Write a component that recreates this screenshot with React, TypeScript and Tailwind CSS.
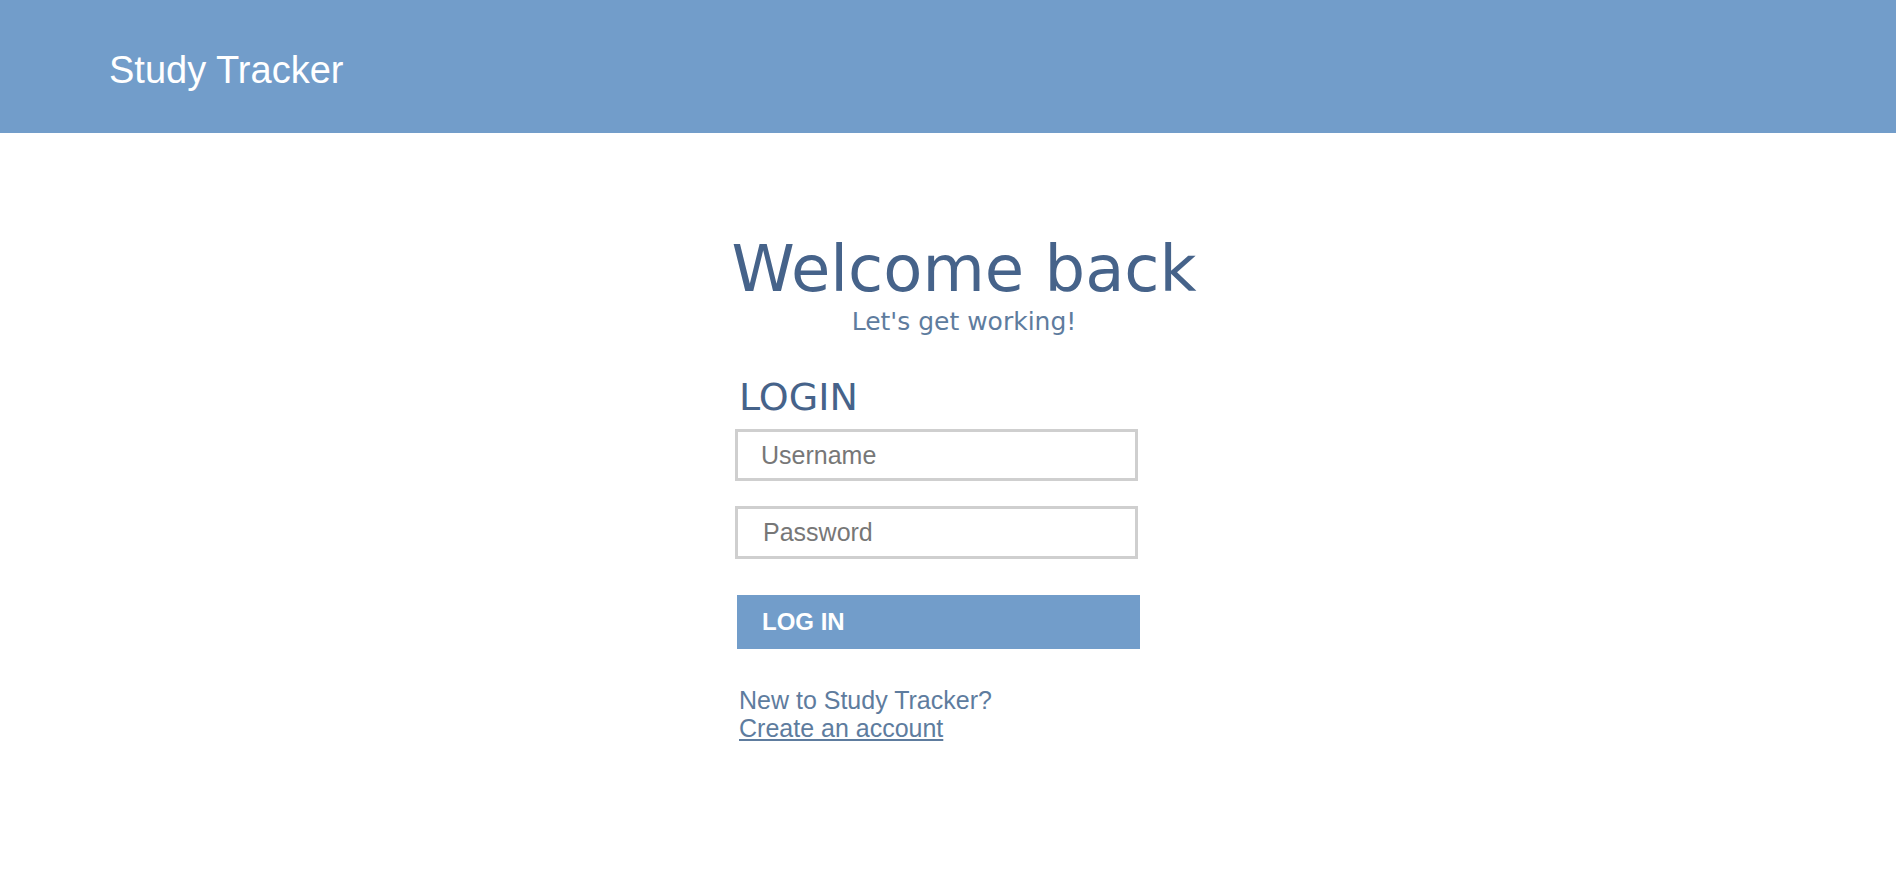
import { useState } from 'react';

export default function App() {
  const [username, setUsername] = useState('');
  const [password, setPassword] = useState('');

  return (
    <div className="min-h-[890px] bg-white font-['Liberation_Sans',Arial,sans-serif]">
      <header className="h-[133px] bg-[#729dca] flex items-center pl-[109px] mr-[4px]">
        <h1 className="text-[38px] leading-none text-white pt-[6px]">Study Tracker</h1>
      </header>

      <main className="flex flex-col items-center">
        <div className="flex flex-col items-center ml-[28px] mt-[104px] font-['DejaVu_Sans',Verdana,sans-serif]">
          <h2 className="text-[64px] leading-[64px] text-[#46638a]">Welcome back</h2>
          <p className="mt-[7px] text-[25px] leading-[28px] text-[#5e7c9e]">Let's get working!</p>
        </div>

        <form
          className="w-[405px] mr-[25px] mt-[40px] flex flex-col"
          onSubmit={e => e.preventDefault()}
        >
          <h3 className="ml-[4px] font-['DejaVu_Sans',Verdana,sans-serif] text-[38px] leading-[42px] text-[#46638a]">LOGIN</h3>
          <input
            type="text"
            placeholder="Username"
            value={username}
            onChange={e => setUsername(e.target.value)}
            className="mt-[11px] h-[52px] w-[403px] border-[3px] border-[#cfcfcf] px-[23px] text-[25px] text-[#555] placeholder:text-[#777] outline-none"
          />
          <input
            type="password"
            placeholder="Password"
            value={password}
            onChange={e => setPassword(e.target.value)}
            className="mt-[25px] h-[53px] w-[403px] border-[3px] border-[#cfcfcf] px-[25px] text-[25px] text-[#555] placeholder:text-[#777] outline-none"
          />
          <button
            type="submit"
            className="mt-[36px] ml-[2px] h-[54px] w-[403px] bg-[#729dca] text-left pl-[25px] text-[24px] font-bold text-white"
          >
            LOG IN
          </button>
          <div className="mt-[37px] ml-[4px] text-[25px] leading-[28px] text-[#5e7c9e]">
            <div>New to Study Tracker?</div>
            <a href="#" className="underline">Create an account</a>
          </div>
        </form>
      </main>
    </div>
  );
}
